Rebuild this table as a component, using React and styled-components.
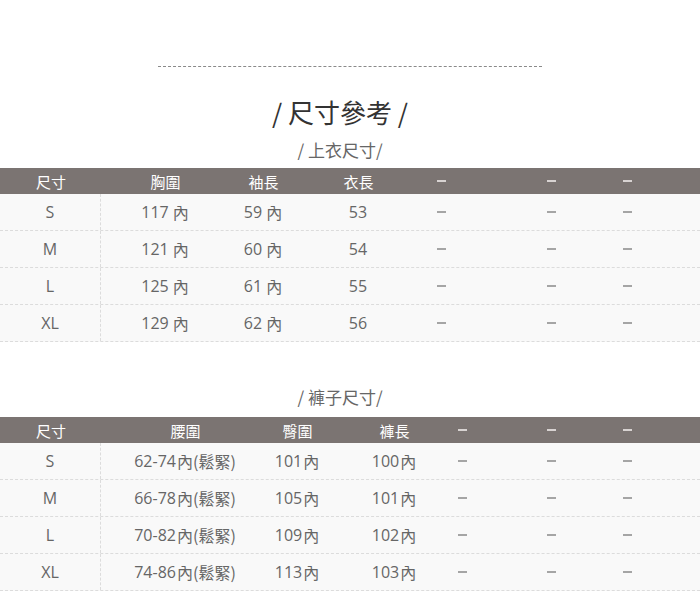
import React from "react"
import styled, { createGlobalStyle } from "styled-components"

const GlobalStyle = createGlobalStyle`
  body {
    margin: 0;
    background: #fff;
    font-family: "Open Sans", "Noto Sans CJK TC", sans-serif;
  }
`

const Page = styled.div`
  width: 700px;
  padding-top: 66px;
`
const Divider = styled.div`
  width: 384px;
  margin: 0 auto;
  border-top: 1px dashed #8a8a8a;
`
const Title = styled.h1`
  margin: 30px 0 0;
  padding-right: 20px;
  font-size: 26px;
  line-height: 30px;
  font-weight: 400;
  color: #333;
  text-align: center;
  font-family: "Noto Sans CJK TC", sans-serif;
`
const Subtitle = styled.h2`
  margin: ${({ $top }) => $top}px 0 0;
  padding-right: 20px;
  font-size: 17px;
  line-height: 20px;
  font-weight: 400;
  color: #666;
  text-align: center;
  font-family: "Noto Sans CJK TC", sans-serif;
`
const Table = styled.div`
  margin-top: ${({ $top }) => $top}px;
  width: 700px;
`
const HeadRow = styled.div`
  display: flex;
  align-items: center;
  height: 26px;
  background: #7b7472;
  color: #fff;
  font-size: 15px;
`
const BodyRow = styled.div`
  display: flex;
  align-items: stretch;
  height: 36px;
  background: #f9f9f9;
  border-bottom: 1px dashed #dcdcdc;
  color: #666;
  font-size: 16px;
`
const Cell = styled.div`
  flex: 0 0 ${({ $w }) => $w}px;
  margin-left: ${({ $ml }) => $ml}px;
  display: flex;
  align-items: center;
  justify-content: center;
  white-space: nowrap;
  color: ${({ $dash, $head }) => ($dash ? ($head ? "#d8d3d2" : "#a5a5a5") : "inherit")};
`
const SizeCell = styled(Cell)`
  border-right: ${({ $head }) => ($head ? "none" : "1px dashed #dcdcdc")};
  box-sizing: border-box;
`
const Unit = styled.span`
  font-family: "Noto Sans CJK TC", sans-serif;
  margin-left: ${({ $gap }) => ($gap ? 4 : 1)}px;
`
const Dash = styled.span`
  display: inline-block;
  width: 9px;
  height: 1.5px;
  background: currentColor;
`

const layout = (centers, widths) => {
  let right = 101
  return centers.map((c, i) => {
    const left = c - widths[i] / 2
    const ml = left - right
    right = left + widths[i]
    return { w: widths[i], ml }
  })
}

const topCols = layout([165, 263, 358, 441, 551, 627], [110, 70, 70, 40, 40, 40])
const bottomCols = layout([185, 297, 394, 462, 551, 627], [120, 70, 70, 40, 40, 40])

const Value = ({ v, gap }) => {
  if (v === "-") return <Dash />
  const m = v.match(/^([\d-]+)(內)?(.*)$/)
  if (!m || !m[2]) return v
  return (
    <>
      {m[1]}
      <Unit $gap={gap}>
        {m[2]}
        {m[3]}
      </Unit>
    </>
  )
}

const SizeTable = ({ top, cols, head, rows, gap }) => (
  <Table $top={top}>
    <HeadRow>
      <SizeCell $w={101} $ml={0} $head>
        <Unit>{head[0]}</Unit>
      </SizeCell>
      {head.slice(1).map((h, i) => (
        <Cell key={i} $w={cols[i].w} $ml={cols[i].ml} $head $dash={h === "-"}>
          {h === "-" ? <Dash /> : <Unit>{h}</Unit>}
        </Cell>
      ))}
    </HeadRow>
    {rows.map((r) => (
      <BodyRow key={r[0]}>
        <SizeCell $w={101} $ml={0}>
          {r[0]}
        </SizeCell>
        {r.slice(1).map((v, i) => (
          <Cell key={i} $w={cols[i].w} $ml={cols[i].ml} $dash={v === "-"}>
            <Value v={v} gap={gap} />
          </Cell>
        ))}
      </BodyRow>
    ))}
  </Table>
)

const topHead = ["尺寸", "胸圍", "袖長", "衣長", "-", "-", "-"]
const topRows = [
  ["S", "117內", "59內", "53", "-", "-", "-"],
  ["M", "121內", "60內", "54", "-", "-", "-"],
  ["L", "125內", "61內", "55", "-", "-", "-"],
  ["XL", "129內", "62內", "56", "-", "-", "-"],
]
const bottomHead = ["尺寸", "腰圍", "臀圍", "褲長", "-", "-", "-"]
const bottomRows = [
  ["S", "62-74內(鬆緊)", "101內", "100內", "-", "-", "-"],
  ["M", "66-78內(鬆緊)", "105內", "101內", "-", "-", "-"],
  ["L", "70-82內(鬆緊)", "109內", "102內", "-", "-", "-"],
  ["XL", "74-86內(鬆緊)", "113內", "103內", "-", "-", "-"],
]

export default function App() {
  return (
    <>
      <GlobalStyle />
      <Page>
        <Divider />
        <Title>/ 尺寸參考 /</Title>
        <Subtitle $top={13}>/ 上衣尺寸/</Subtitle>
        <SizeTable top={8} cols={topCols} head={topHead} rows={topRows} gap />
        <Subtitle $top={45}>/ 褲子尺寸/</Subtitle>
        <SizeTable top={10} cols={bottomCols} head={bottomHead} rows={bottomRows} />
      </Page>
    </>
  )
}
